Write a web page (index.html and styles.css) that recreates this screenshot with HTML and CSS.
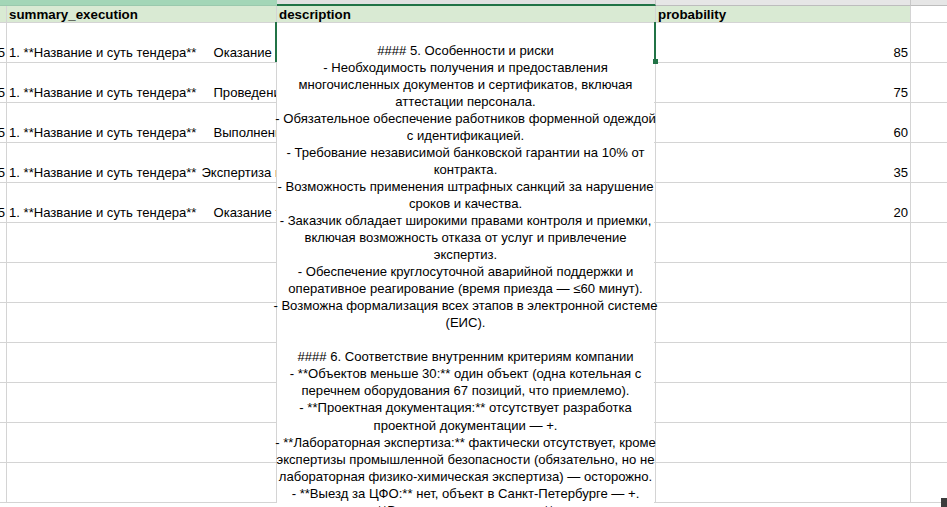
FILE: index.html
```html
<!DOCTYPE html>
<html lang="ru">
<head>
<meta charset="utf-8">
<title>Sheet</title>
<link rel="stylesheet" href="styles.css">
</head>
<body>
<div class="sheet">
  <div class="grid">
    <!-- column header strip -->
    <div class="strip strip-sel-range"></div>
    <div class="strip strip-sel-range"></div>
    <div class="strip strip-active"></div>
    <div class="strip"></div>
    <div class="strip strip-last"></div>

    <!-- field header row -->
    <div class="hcell"></div>
    <div class="hcell">summary_execution</div>
    <div class="hcell">description</div>
    <div class="hcell">probability</div>
    <div class="hcell hcell-empty"></div>

    <!-- row 1 -->
    <div class="cell cell-a">5</div>
    <div class="cell cell-b"><span class="lead">1. **Название и суть тендера**</span><span class="rest gap-wide">Оказание услуг по техническому обслуживанию</span></div>
    <div class="cell"></div>
    <div class="cell cell-num">85</div>
    <div class="cell"></div>
    <!-- row 2 -->
    <div class="cell cell-a">5</div>
    <div class="cell cell-b"><span class="lead">1. **Название и суть тендера**</span><span class="rest gap-wide">Проведение работ по капитальному ремонту</span></div>
    <div class="cell"></div>
    <div class="cell cell-num">75</div>
    <div class="cell"></div>
    <!-- row 3 -->
    <div class="cell cell-a">5</div>
    <div class="cell cell-b"><span class="lead">1. **Название и суть тендера**</span><span class="rest gap-wide">Выполнение работ по монтажу</span></div>
    <div class="cell"></div>
    <div class="cell cell-num">60</div>
    <div class="cell"></div>
    <!-- row 4 -->
    <div class="cell cell-a">5</div>
    <div class="cell cell-b"><span class="lead">1. **Название и суть тендера**</span><span class="rest gap-narrow">Экспертиза промышленной безопасности</span></div>
    <div class="cell"></div>
    <div class="cell cell-num">35</div>
    <div class="cell"></div>
    <!-- row 5 -->
    <div class="cell cell-a">5</div>
    <div class="cell cell-b"><span class="lead">1. **Название и суть тендера**</span><span class="rest gap-wide">Оказание технических услуг</span></div>
    <div class="cell"></div>
    <div class="cell cell-num">20</div>
    <div class="cell"></div>
    <!-- empty rows -->
    <div class="cell"></div><div class="cell"></div><div class="cell"></div><div class="cell"></div><div class="cell"></div>
    <div class="cell"></div><div class="cell"></div><div class="cell"></div><div class="cell"></div><div class="cell"></div>
    <div class="cell"></div><div class="cell"></div><div class="cell"></div><div class="cell"></div><div class="cell"></div>
    <div class="cell"></div><div class="cell"></div><div class="cell"></div><div class="cell"></div><div class="cell"></div>
    <div class="cell"></div><div class="cell"></div><div class="cell"></div><div class="cell"></div><div class="cell"></div>
    <div class="cell"></div><div class="cell"></div><div class="cell"></div><div class="cell"></div><div class="cell"></div>
    <div class="cell"></div><div class="cell"></div><div class="cell"></div><div class="cell"></div><div class="cell"></div>
  </div>

  <!-- selection frame of the active cell -->
  <div class="sel-left"></div>
  <div class="sel-right"></div>
  <div class="sel-handle"></div>

  <!-- expanded content of the active cell -->
  <div class="popout">
    <div class="ln">#### 5. Особенности и риски</div>
    <div class="ln">- Необходимость получения и предоставления</div>
    <div class="ln">многочисленных документов и сертификатов, включая</div>
    <div class="ln">аттестации персонала.</div>
    <div class="ln">- Обязательное обеспечение работников форменной одеждой</div>
    <div class="ln">с идентификацией.</div>
    <div class="ln">- Требование независимой банковской гарантии на 10% от</div>
    <div class="ln">контракта.</div>
    <div class="ln">- Возможность применения штрафных санкций за нарушение</div>
    <div class="ln">сроков и качества.</div>
    <div class="ln">- Заказчик обладает широкими правами контроля и приемки,</div>
    <div class="ln">включая возможность отказа от услуг и привлечение</div>
    <div class="ln">экспертиз.</div>
    <div class="ln">- Обеспечение круглосуточной аварийной поддержки и</div>
    <div class="ln">оперативное реагирование (время приезда — ≤60 минут).</div>
    <div class="ln">- Возможна формализация всех этапов в электронной системе</div>
    <div class="ln">(ЕИС).</div>
    <div class="ln">&nbsp;</div>
    <div class="ln">#### 6. Соответствие внутренним критериям компании</div>
    <div class="ln">- **Объектов меньше 30:** один объект (одна котельная с</div>
    <div class="ln">перечнем оборудования 67 позиций, что приемлемо).</div>
    <div class="ln">- **Проектная документация:** отсутствует разработка</div>
    <div class="ln">проектной документации — +.</div>
    <div class="ln">- **Лабораторная экспертиза:** фактически отсутствует, кроме</div>
    <div class="ln">экспертизы промышленной безопасности (обязательно, но не</div>
    <div class="ln">лабораторная физико-химическая экспертиза) — осторожно.</div>
    <div class="ln">- **Выезд за ЦФО:** нет, объект в Санкт-Петербурге — +.</div>
    <div class="ln">**Важные ключевые этапы:**</div>
  </div>

  <div class="corner"></div>
</div>
</body>
</html>
```

FILE: styles.css
```css
html, body {
  margin: 0;
  padding: 0;
  background: #ffffff;
  overflow: hidden;
}

.sheet {
  position: relative;
  width: 947px;
  height: 507px;
  overflow: hidden;
  font-family: "Liberation Sans", Arial, sans-serif;
  font-size: 13.1px;
  color: #000000;
}

.grid {
  display: grid;
  grid-template-columns: 7px 270px 379px 255px 60px;
  grid-template-rows: 6px 17px repeat(12, 40px);
}

.strip {
  background: #e6e6e6;
  border-right: 1px solid #c8c8c8;
  border-bottom: 1px solid #bdbdbd;
  box-sizing: border-box;
}
.strip-sel-range {
  background: #a3d6b7;
  border-right: none;
  border-bottom: 1px solid #9ac9ad;
}
.strip-active {
  background: #e1e1e1;
  border-bottom: 2px solid #217346;
}
.strip-last {
  border-right: none;
}

.hcell {
  background: #d9ead3;
  border-right: 1px solid #d4d4d4;
  border-bottom: 1px solid #d4d4d4;
  box-sizing: border-box;
  font-weight: bold;
  font-size: 13.33px;
  line-height: 17px;
  padding-left: 2px;
  white-space: nowrap;
  overflow: hidden;
}
.hcell-empty {
  background: #ffffff;
  border-right: none;
}

.cell {
  border-right: 1px solid #d4d4d4;
  border-bottom: 1px solid #d4d4d4;
  box-sizing: border-box;
  display: flex;
  align-items: flex-end;
  line-height: 17px;
  padding-bottom: 1px;
  white-space: nowrap;
  overflow: hidden;
}

.cell-a {
  justify-content: flex-end;
  padding-right: 1px;
}

.cell-b {
  padding-left: 2px;
}
.gap-wide {
  margin-left: 17px;
}
.gap-narrow {
  margin-left: 5px;
}

.cell-num {
  justify-content: flex-end;
  padding-right: 2px;
}

.sel-left,
.sel-right {
  position: absolute;
  top: 22px;
  width: 2px;
  height: 40px;
  background: #217346;
  z-index: 3;
}
.sel-left {
  left: 275px;
}
.sel-right {
  left: 654px;
}
.sel-handle {
  position: absolute;
  left: 653px;
  top: 59px;
  width: 5px;
  height: 5px;
  background: #217346;
  z-index: 4;
}

.popout {
  position: absolute;
  left: 277px;
  top: 23px;
  width: 377px;
  height: 484px;
  background: #ffffff;
  box-sizing: border-box;
  padding-top: 18.5px;
  display: flex;
  flex-direction: column;
  align-items: center;
  z-index: 2;
}
.ln {
  white-space: nowrap;
  line-height: 17.05px;
}

.corner {
  position: absolute;
  right: 0;
  bottom: 0;
  width: 6px;
  height: 9px;
  background: #3c3c3c;
  z-index: 5;
}
```
